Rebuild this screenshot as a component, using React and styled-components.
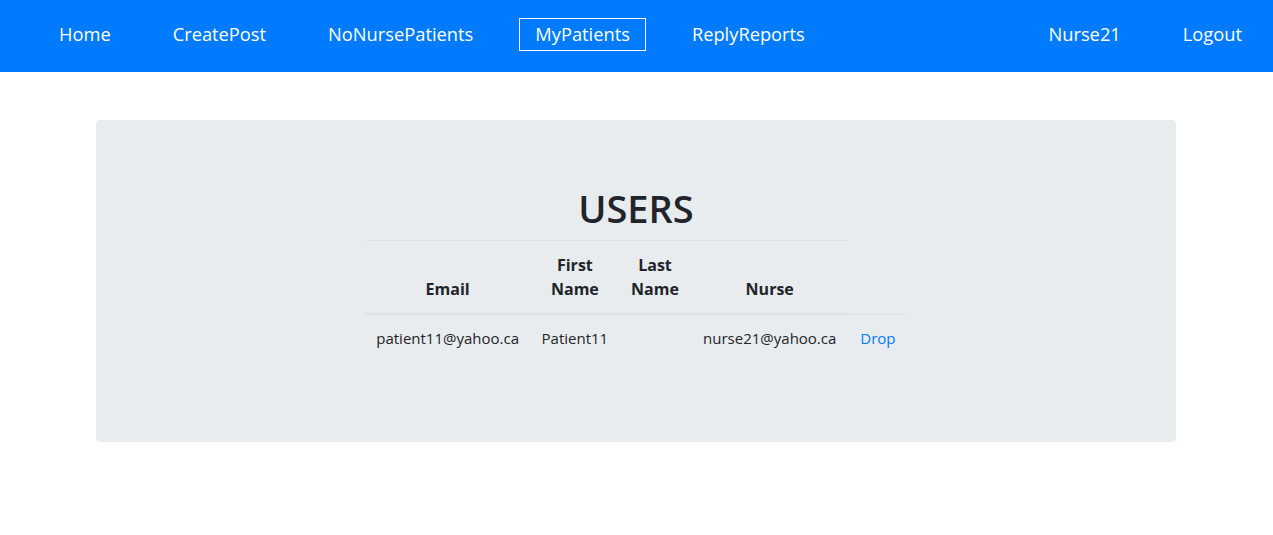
import styled, { createGlobalStyle } from "styled-components"

const GlobalStyle = createGlobalStyle`
    body {
        margin: 0;
        font-family: "Open Sans", "Liberation Sans", sans-serif;
        font-size: 16px;
        line-height: 1.5;
        color: #212529;
        background: #fff;
    }
`

const NavBar = styled.nav`
    height: 72px;
    background: #007bff;
    display: flex;
    align-items: center;
    justify-content: space-between;
    padding: 0 15px 4px 43px;
    box-sizing: border-box;
`
const NavGroup = styled.div`
    display: flex;
    align-items: center;
    gap: 30px;
`
const NavLink = styled.a`
    color: #fff;
    font-size: 18.3px;
    line-height: 30px;
    padding: 0 15px 1px;
    border: 1px solid ${(props) => (props.$active ? "#fff" : "transparent")};
    text-decoration: none;
    cursor: pointer;
`

const Jumbotron = styled.div`
    width: 1080px;
    margin: 48px 0 0 96px;
    box-sizing: border-box;
    background: #e9ecef;
    border-radius: 4px;
    padding: 64px 32px;
`
const Title = styled.h1`
    margin: 0 0 8px;
    font-size: 38px;
    font-weight: 600;
    line-height: 48px;
    text-align: center;
`
const Table = styled.table`
    width: 543px;
    margin: 0 auto 16px;
    border-collapse: collapse;
    table-layout: fixed;
`
const Th = styled.th`
    padding: 12px;
    vertical-align: bottom;
    text-align: center;
    font-weight: 700;
    border-top: 1px solid #dee2e6;
    border-bottom: 2px solid #dee2e6;
`
const Td = styled.td`
    padding: 12px 0;
    text-align: center;
    white-space: nowrap;
    border-top: 1px solid #dee2e6;
    font-size: 15px;
`
const DropLink = styled.a`
    color: #007bff;
    text-decoration: none;
    cursor: pointer;
`

const links = ["Home", "CreatePost", "NoNursePatients", "MyPatients", "ReplyReports"]
const columns = [166, 88, 72, 157, 59]

export default function App() {
    return (
        <>
            <GlobalStyle />
            <NavBar>
                <NavGroup>
                    {links.map((l) => (
                        <NavLink key={l} $active={l === "MyPatients"}>{l}</NavLink>
                    ))}
                </NavGroup>
                <NavGroup>
                    <NavLink>Nurse21</NavLink>
                    <NavLink>Logout</NavLink>
                </NavGroup>
            </NavBar>
            <Jumbotron>
                <Title>USERS</Title>
                <Table>
                    <colgroup>
                        {columns.map((w, i) => (
                            <col key={i} style={{ width: w }} />
                        ))}
                    </colgroup>
                    <thead>
                        <tr>
                            <Th>Email</Th>
                            <Th>First Name</Th>
                            <Th>Last Name</Th>
                            <Th>Nurse</Th>
                        </tr>
                    </thead>
                    <tbody>
                        <tr>
                            <Td>patient11@yahoo.ca</Td>
                            <Td>Patient11</Td>
                            <Td></Td>
                            <Td>nurse21@yahoo.ca</Td>
                            <Td><DropLink>Drop</DropLink></Td>
                        </tr>
                    </tbody>
                </Table>
            </Jumbotron>
        </>
    )
}
